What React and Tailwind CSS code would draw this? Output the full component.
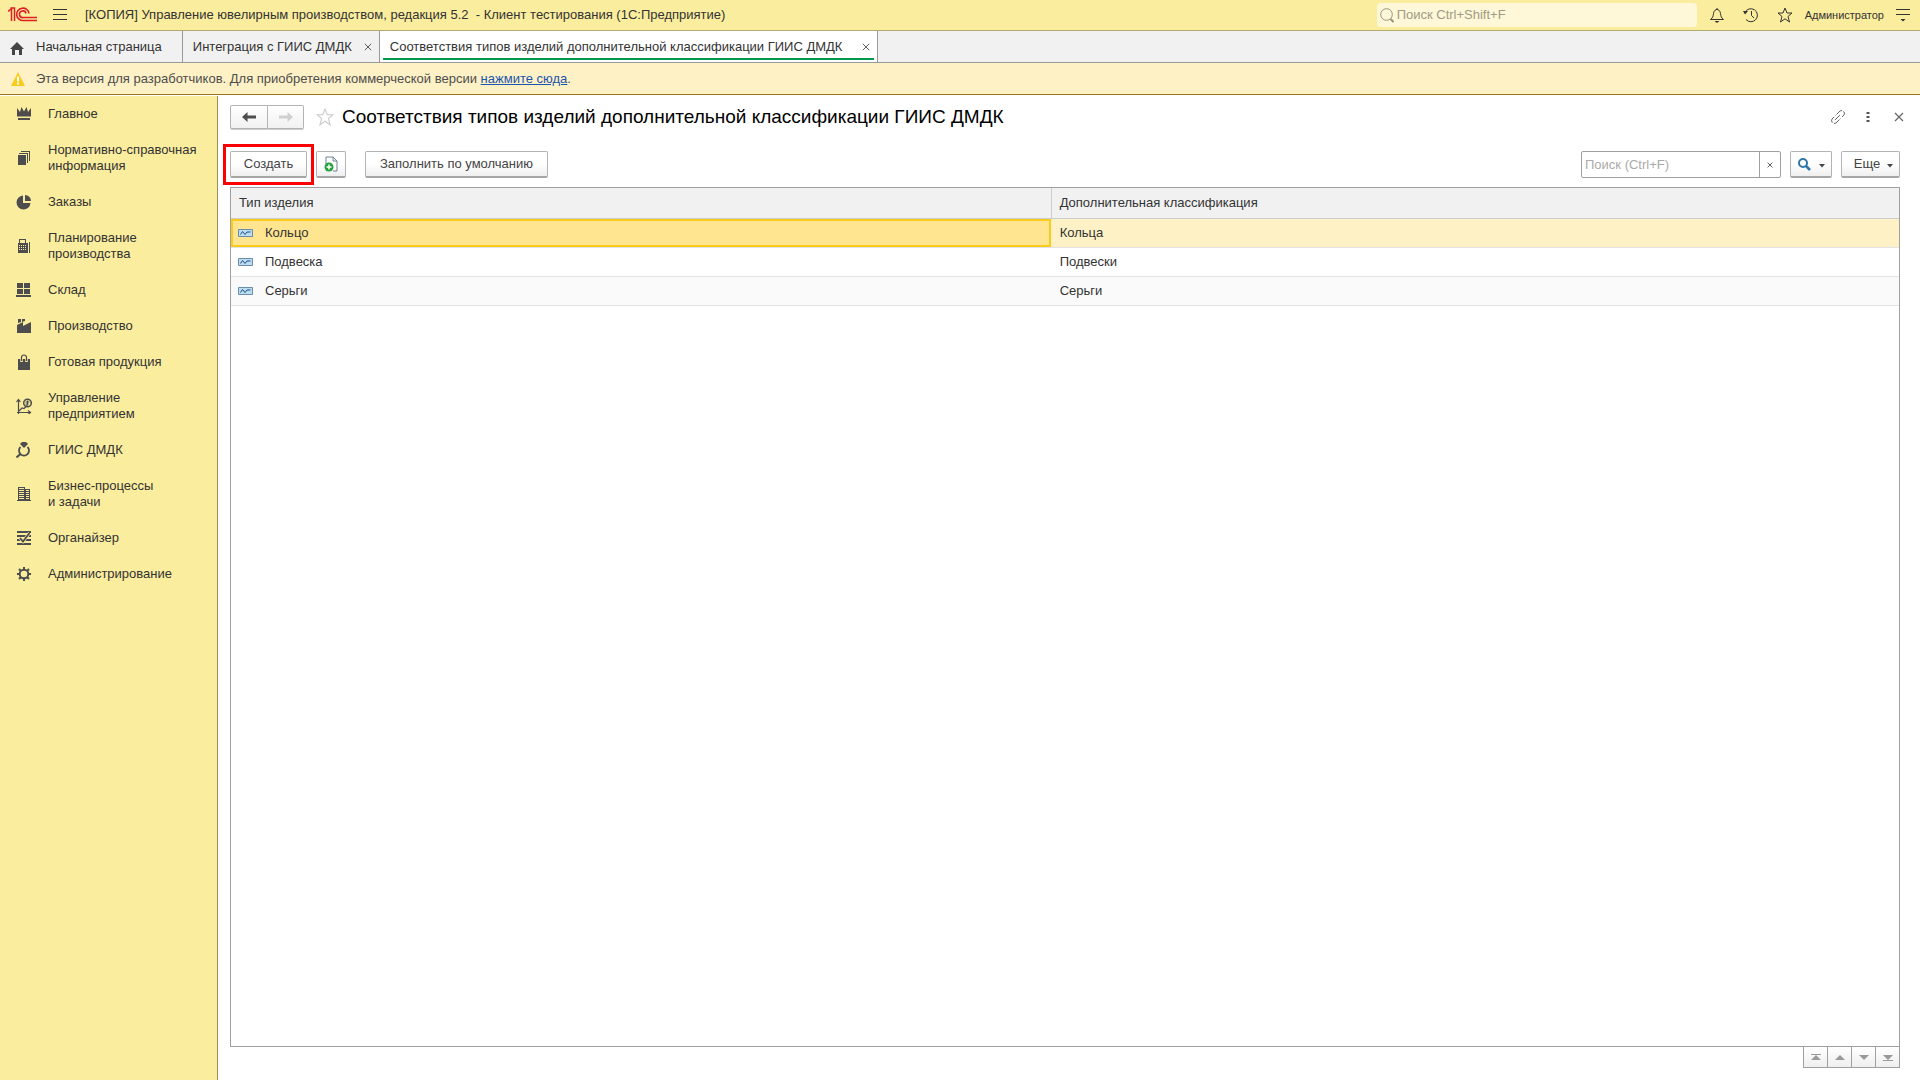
import { useState } from 'react';

const SECTIONS = [
  { icon: 'crown', lines: ['Главное'] },
  { icon: 'docs', lines: ['Нормативно-справочная', 'информация'] },
  { icon: 'pie', lines: ['Заказы'] },
  { icon: 'calc', lines: ['Планирование', 'производства'] },
  { icon: 'store', lines: ['Склад'] },
  { icon: 'factory', lines: ['Производство'] },
  { icon: 'bag', lines: ['Готовая продукция'] },
  { icon: 'chart', lines: ['Управление', 'предприятием'] },
  { icon: 'ring', lines: ['ГИИС ДМДК'] },
  { icon: 'building', lines: ['Бизнес-процессы', 'и задачи'] },
  { icon: 'organizer', lines: ['Органайзер'] },
  { icon: 'gear', lines: ['Администрирование'] },
];

const ROWS = [
  { type: 'Кольцо', extra: 'Кольца' },
  { type: 'Подвеска', extra: 'Подвески' },
  { type: 'Серьги', extra: 'Серьги' },
];

const SECTION_ICONS = {
  crown: (
    <path d="M1 2l3 4 1.500-5L8 5.500 10.500 1 12 6l3-4v8.500H1zM2 12h12v2H2z" fill="currentColor" />
  ),
  docs: (
    <g fill="currentColor">
      <path d="M2 5h8v10H2z" />
      <path d="M3 3h9v10h-1V4H3zM5 1h9v10h-1V2H5z" />
    </g>
  ),
  pie: (
    <g fill="currentColor">
      <path d="M7 1.500V9h7.500A7 7 0 1 1 7 1.500z" />
      <path d="M9 1a6 6 0 0 1 6 6H9z" />
    </g>
  ),
  calc: (
    <g fill="currentColor">
      <path fillRule="evenodd" d="M3 1h7v4h2v10H2V5h1zM4 2v3h5V2zM3 7v1h1V7zM5 7v1h1V7zM7 7v1h1V7zM9 7v1h1V7zM3 9v1h1V9zM5 9v1h1V9zM7 9v1h1V9zM9 9v1h1V9zM3 11v1h1v-1zM5 11v1h1v-1zM7 11v1h1v-1zM9 11v1h1v-1z" />
      <path d="M13 4h1v11h-1z" />
    </g>
  ),
  store: (
    <path d="M1 1h6v5H1zM8 1h6v5H8zM1 7h6v5H1zM8 7h6v5H8zM0 13h15v2H0z" fill="currentColor" />
  ),
  factory: (
    <path d="M2 1h3v3L2 5zM6 1h3v2L6 4zM1 15V7l6-3v4l8-4v11z" fill="currentColor" />
  ),
  bag: (
    <g>
      <path d="M2 5h12v11H2z" fill="currentColor" />
      <path d="M5.500 8V4a2.500 3 0 0 1 5 0v4" fill="none" stroke="#fbed9e" strokeWidth="2.500" />
      <path d="M5.500 7V3.500a2.500 2.500 0 0 1 5 0V7" fill="none" stroke="currentColor" strokeWidth="1.200" />
    </g>
  ),
  chart: (
    <g fill="none" stroke="currentColor" strokeWidth="1.200">
      <path d="M2.500 16V2M.5 4l2-2.500 2 2.500M1 14.500h13M12 12.500l2.500 2-2.500 2M3 13l3-3 2 .5 3-3" />
      <circle cx="11.500" cy="5" r="3.800" strokeWidth="1.500" />
      <path d="M9.500 4h4M9.500 6h3M11.500 2.500v5" />
    </g>
  ),
  ring: (
    <g>
      <path d="M6 0h4l2 2-4 4-4-4z" fill="currentColor" />
      <path d="M4.500 5a5 5 0 1 0 7 0" fill="none" stroke="currentColor" strokeWidth="1.800" />
      <path d="M4.500 12L.5 15.500" stroke="currentColor" strokeWidth="2" />
    </g>
  ),
  building: (
    <g fill="currentColor">
      <path fillRule="evenodd" d="M2 1h7v13H2zM3 2v1h5V2zM3 4v1h5V4zM3 6v1h5V6zM3 8v1h5V8zM3 10v1h5v-1zM3 12v1h5v-1z" />
      <path fillRule="evenodd" d="M9 3h5v11H9zM10 4v1h3V4zM10 6v1h3V6zM10 8v1h3V8zM10 10v1h3v-1zM10 12v1h3v-1z" />
      <path d="M1 14h14v1H1z" />
    </g>
  ),
  organizer: (
    <g fill="none" stroke="currentColor">
      <path d="M1 2h14M1 6h14M1 10h14M1 14h14" strokeWidth="2" />
      <path d="M4 8l3 3.500L13.500 3" stroke="#fbed9e" strokeWidth="3" />
      <path d="M4 8l3 3.500L13.500 3" strokeWidth="1.800" />
    </g>
  ),
  gear: (
    <g fill="none" stroke="currentColor">
      <circle cx="8" cy="8" r="4.300" strokeWidth="2" />
      <path d="M8 1v2.500M8 12.500V15M1 8h2.500M12.500 8H15M3 3l1.800 1.800M11.200 11.200L13 13M3 13l1.800-1.800M11.200 4.800L13 3" strokeWidth="2" />
    </g>
  ),
};

function SectionIcon({ name }) {
  return (
    <svg viewBox="0 0 16 16" className="size-4 shrink-0 text-[#4d4d4d]" aria-hidden="true">
      {SECTION_ICONS[name]}
    </svg>
  );
}

function Logo() {
  return (
    <svg viewBox="0 0 30 16" className="h-4 w-[30px] shrink-0" fill="none" stroke="#dd1f26" aria-hidden="true">
      <path d="M0 4.500L3.500 1.500V14M2.500 1H6.500V14" strokeWidth="1.500" />
      <path d="M21 6.500A6.200 6.200 0 1 0 15.500 13.500H29" strokeWidth="1.600" />
      <path d="M18 6.500A3.300 3.300 0 1 0 15.500 10.500H29" strokeWidth="1.600" />
    </svg>
  );
}

function Star({ className }) {
  return (
    <svg viewBox="0 0 16 16" className={className} fill="none" stroke="currentColor" aria-hidden="true">
      <path d="M8 1l2 5h5l-4 3.500 1.500 5.500L8 11.800 3.500 15 5 9.500 1 6h5z" />
    </svg>
  );
}

function Cross({ className }) {
  return (
    <svg viewBox="0 0 10 10" className={className} fill="none" stroke="currentColor" aria-hidden="true">
      <path d="M1 1l8 8M9 1L1 9" strokeWidth="1.200" />
    </svg>
  );
}

function Caret() {
  return (
    <svg viewBox="0 0 6 4" className="mt-1 h-1 w-1.5 shrink-0" aria-hidden="true">
      <path d="M0 0h6L3 3.500z" fill="#444" />
    </svg>
  );
}

function TopBar() {
  return (
    <header className="flex h-[31px] shrink-0 items-center border-b border-[#b3aa70] bg-[#fbed9e] pr-2.5 pl-2 text-[#333]">
      <Logo />
      <button aria-label="Главное меню" className="ml-[15px]">
        <svg viewBox="0 0 14 12" className="h-3 w-3.5" stroke="#333" aria-hidden="true">
          <path d="M0 .5h14M0 5.500h14M0 10.500h14" />
        </svg>
      </button>
      <h1 className="ml-[18px] flex-1 whitespace-pre">
        [КОПИЯ] Управление ювелирным производством, редакция 5.2  - Клиент тестирования (1С:Предприятие)
      </h1>
      <label className="flex h-6 w-80 items-center rounded-sm bg-[#fef7d8] pl-[3px]">
        <svg viewBox="0 0 14 15" className="h-[15px] w-3.5" fill="none" stroke="#999480" aria-hidden="true">
          <circle cx="6.500" cy="6.500" r="5.800" />
          <path d="M10.500 11l3 3" strokeWidth="2" />
        </svg>
        <input
          aria-label="Глобальный поиск"
          placeholder="Поиск Ctrl+Shift+F"
          className="ml-[3px] flex-1 bg-transparent outline-none placeholder:text-[#a09b85]"
        />
      </label>
      <div className="ml-3 flex items-center gap-[18px]">
        <button aria-label="Уведомления">
          <svg viewBox="0 0 16 16" className="size-4" fill="none" stroke="#333" aria-hidden="true">
            <path d="M8 1v1.500M1.500 12.500c2.500-2 2.500-3 3-6C5 3.500 6.500 2.500 8 2.500s3 1 3.500 4c.5 3 .5 4 3 6z" />
            <path d="M5.500 14h5L8 16z" fill="#333" stroke="none" />
          </svg>
        </button>
        <button aria-label="История">
          <svg viewBox="0 0 16 16" className="size-4" fill="none" stroke="#333" aria-hidden="true">
            <path d="M2 5.500A6.500 6.500 0 1 1 3 12.500M8.500 4v4.500l2.500 2.500" />
            <path d="M0 4h5L2 7.500z" fill="#333" stroke="none" />
          </svg>
        </button>
        <button aria-label="Избранное">
          <Star className="size-4" />
        </button>
      </div>
      <button className="ml-3 text-[11px]">Администратор</button>
      <button aria-label="Настройки" className="ml-3">
        <svg viewBox="0 0 14 14" className="size-3.5" aria-hidden="true">
          <path d="M0 1.500h14M0 6.500h14" stroke="#333" />
          <path d="M4.500 11h5L7 13.500z" fill="#333" />
        </svg>
      </button>
    </header>
  );
}

function TabBar() {
  return (
    <nav className="flex h-8 shrink-0 border-b border-[#999] bg-[#f1f1f1] text-[#333]">
      <button className="flex items-center border-r border-[#999] pr-5 pl-2.5">
        <svg viewBox="0 0 14 13" className="mt-1 h-[13px] w-3.5" aria-hidden="true">
          <path d="M7 0l7 7h-2v6H9V8H5v5H2V7H0z" fill="#444" />
        </svg>
        <span className="ml-3">Начальная страница</span>
      </button>
      <div className="flex items-center border-r border-[#999] pr-[7px] pl-2.5">
        <button>Интеграция с ГИИС ДМДК</button>
        <button aria-label="Закрыть вкладку" className="ml-3">
          <Cross className="size-2 text-[#555]" />
        </button>
      </div>
      <div className="flex border-r border-[#999] bg-white px-[3px] pb-0.5">
        <div className="flex items-center border-b-2 border-[#009a4e] pt-1 pr-1 pl-[7px]">
          <button>Соответствия типов изделий дополнительной классификации ГИИС ДМДК</button>
          <button aria-label="Закрыть вкладку" className="ml-5">
            <Cross className="size-2 text-[#555]" />
          </button>
        </div>
      </div>
    </nav>
  );
}

function DevBanner() {
  return (
    <div className="flex h-8 shrink-0 items-center border-b border-[#96791a] bg-[#fdf1c5] pl-[11px] text-[#4d4d4d]">
      <svg viewBox="0 0 14 14" className="size-3.5" aria-hidden="true">
        <path d="M7 0l7 14H0z" fill="#f9cb1c" />
        <path d="M7 4.500v5M7 10.500v2" stroke="#fff" strokeWidth="2" />
      </svg>
      <p className="ml-[11px]">
        Эта версия для разработчиков. Для приобретения коммерческой версии{' '}
        <a href="#buy" className="text-[#1c55ae] underline">нажмите сюда</a>.
      </p>
    </div>
  );
}

function Sidebar() {
  return (
    <aside className="w-[218px] shrink-0 border-r border-[#998f55] bg-[#fbed9e] text-[#333]">
      {SECTIONS.map((section) => (
        <a key={section.icon} href={`#${section.icon}`} className="flex items-center gap-4 py-2.5 pl-4 leading-4">
          <SectionIcon name={section.icon} />
          <span>
            {section.lines.map((line) => (
              <span key={line} className="block">{line}</span>
            ))}
          </span>
        </a>
      ))}
    </aside>
  );
}

const BUTTON =
  'flex h-[27px] items-center justify-center rounded-xs border border-[#b3b3b3] border-b-2 border-b-[#a6a6a6] bg-linear-to-b from-white from-50% to-[#efefef] text-[#444]';

function FormHeader() {
  return (
    <div className="flex h-6 items-center">
      <div className="flex">
        <button aria-label="Назад" className="flex h-6 w-[38px] items-center justify-center rounded-l-xs border border-[#b3b3b3] bg-linear-to-b from-white to-[#f1f1f1] shadow-[0_1px_0_#ccc]">
          <svg viewBox="0 0 14 12" className="h-3 w-3.5" aria-hidden="true">
            <path d="M0 6l5.500-5v3.500H14v3H5.500V11z" fill="#4d4d4d" />
          </svg>
        </button>
        <button aria-label="Вперед" className="flex h-6 w-9 items-center justify-center rounded-r-xs border border-l-0 border-[#b3b3b3] bg-linear-to-b from-white to-[#f1f1f1] shadow-[0_1px_0_#ccc]">
          <svg viewBox="0 0 14 12" className="h-3 w-3.5" aria-hidden="true">
            <path d="M0 4.500h8.500V1L14 6l-5.500 5V7.500H0z" fill="#d0d0d0" />
          </svg>
        </button>
      </div>
      <button aria-label="В избранное" className="ml-3">
        <Star className="size-[18px] text-[#ccc]" />
      </button>
      <h2 className="ml-2 flex-1 text-[19px] leading-6 text-black">
        Соответствия типов изделий дополнительной классификации ГИИС ДМДК
      </h2>
      <div className="-mr-2 flex items-center text-[#666]">
        <button aria-label="Ссылка">
          <svg viewBox="0 0 16 16" className="size-4" fill="none" stroke="currentColor" aria-hidden="true">
            <path d="M5 11l6-6M6.500 5.500L10 2a2.900 2.900 0 0 1 4 4l-3.500 3.500M9.500 10.500L6 14a2.900 2.900 0 0 1-4-4l3.500-3.500" strokeDasharray="7 1.500" />
          </svg>
        </button>
        <button aria-label="Дополнительно" className="ml-5">
          <svg viewBox="0 0 4 12" className="h-3 w-1" fill="#555" aria-hidden="true">
            <path d="M.5 1h3v2h-3zM.5 5h3v2h-3zM.5 9h3v2h-3z" />
          </svg>
        </button>
        <button aria-label="Закрыть" className="ml-5 p-1">
          <Cross className="size-2.5" />
        </button>
      </div>
    </div>
  );
}

function Toolbar() {
  const [search, setSearch] = useState('');

  return (
    <div className="mt-[15px] flex h-[41px] items-center">
      <div className="-ml-[7px] border-3 border-[#ff0000] p-1">
        <button className={`${BUTTON} w-[77px]`}>Создать</button>
      </div>
      <button aria-label="Скопировать" className={`${BUTTON} ml-0.5 w-[30px]`}>
        <svg viewBox="0 0 14 16" className="h-4 w-3.5" fill="none" aria-hidden="true">
          <path d="M2 8V1h7l4 4v10H9" stroke="#6f8296" />
          <path d="M9 1v4h4" stroke="#6f8296" />
          <circle cx="5" cy="11" r="4.500" fill="#25a03a" />
          <path d="M5 8.500v5M2.500 11h5" stroke="#fff" strokeWidth="1.500" />
        </svg>
      </button>
      <button className={`${BUTTON} ml-[19px] px-3.5`}>Заполнить по умолчанию</button>
      <div className="ml-auto flex h-[27px] w-[200px] rounded-xs border border-[#a0a0a0] bg-white">
        <input
          aria-label="Поиск"
          value={search}
          onChange={(e) => setSearch(e.target.value)}
          placeholder="Поиск (Ctrl+F)"
          className="w-0 flex-1 px-[3px] outline-none placeholder:text-[#aaa]"
        />
        <button
          aria-label="Очистить"
          onClick={() => setSearch('')}
          className="flex w-[21px] items-center justify-center border-l border-[#a0a0a0]"
        >
          <Cross className="size-1.5 text-[#222]" />
        </button>
      </div>
      <button aria-label="Найти" className={`${BUTTON} ml-[9px] w-[42px] gap-2`}>
        <svg viewBox="0 0 13 13" className="size-[13px]" fill="none" stroke="#2f76ab" aria-hidden="true">
          <circle cx="5" cy="5" r="4" strokeWidth="2" />
          <path d="M8 8l4 4" strokeWidth="2.500" />
        </svg>
        <Caret />
      </button>
      <button className={`${BUTTON} ml-[9px] w-[59px] gap-[7px] pl-1.5`}>
        Еще
        <Caret />
      </button>
    </div>
  );
}

function ItemIcon() {
  return (
    <svg viewBox="0 0 15 8" className="h-2 w-[15px] shrink-0" fill="none" aria-hidden="true">
      <path d="M.5.500h14v7H.5z" fill="#bcdcf2" stroke="#6b8dab" />
      <path d="M2.500 5.500l2-3 2.500 3 2-2.500h3.500" stroke="#1d4f80" />
    </svg>
  );
}

function ItemsTable() {
  const [selected, setSelected] = useState(0);

  return (
    <div className="flex-1 border border-[#a0a0a0] bg-white">
      <table className="w-full table-fixed border-separate border-spacing-0 text-left text-[#333]">
        <colgroup>
          <col className="w-[49.2%]" />
          <col />
        </colgroup>
        <thead>
          <tr className="bg-[#f1f1f1]">
            <th className="h-[31px] border-r border-b border-[#ccc] px-2 font-normal">Тип изделия</th>
            <th className="h-[31px] border-b border-[#ccc] px-2 font-normal">Дополнительная классификация</th>
          </tr>
        </thead>
        <tbody>
          {ROWS.map((row, i) => (
            <tr
              key={row.type}
              onClick={() => setSelected(i)}
              className={i === selected ? 'bg-[#fdf1c5]' : i % 2 === 0 ? 'bg-[#fafafa]' : 'bg-white'}
            >
              <td className="h-[29px] border-b border-[#e3e3e3] p-0 pr-px">
                <div
                  className={`flex h-7 items-center gap-3 border-2 pl-[5px] ${
                    i === selected ? 'border-[#f9cb1c] bg-[#ffe58f]' : 'border-transparent'
                  }`}
                >
                  <ItemIcon />
                  {row.type}
                </div>
              </td>
              <td className="h-[29px] border-b border-[#e3e3e3] px-2 py-0">{row.extra}</td>
            </tr>
          ))}
        </tbody>
      </table>
    </div>
  );
}

const SCROLL_BUTTONS = [
  { label: 'В начало', path: 'M0 1h10v1H0zM5 2l5 5H0z' },
  { label: 'Вверх', path: 'M5 2l5 5H0z' },
  { label: 'Вниз', path: 'M0 2h10L5 7z' },
  { label: 'В конец', path: 'M0 2h10L5 7zM0 7h10v1H0z' },
];

function ScrollButtons() {
  return (
    <div className="flex justify-end">
      <div className="flex border-l border-[#a0a0a0]">
        {SCROLL_BUTTONS.map((button) => (
          <button
            key={button.label}
            aria-label={button.label}
            className="flex h-[21px] w-6 items-center justify-center border-r border-b border-[#a0a0a0] bg-linear-to-b from-white to-[#efefef]"
          >
            <svg viewBox="0 0 10 9" className="h-[9px] w-2.5" fill="#999" aria-hidden="true">
              <path d={button.path} />
            </svg>
          </button>
        ))}
      </div>
    </div>
  );
}

export default function App() {
  return (
    <div className="flex min-h-screen flex-col bg-white font-['Liberation_Sans',Arial,sans-serif] text-[13px] leading-4">
      <TopBar />
      <TabBar />
      <DevBanner />
      <div className="flex flex-1 pt-px">
        <Sidebar />
        <main className="flex flex-1 flex-col pt-[9px] pr-5 pb-3 pl-3">
          <FormHeader />
          <Toolbar />
          <div className="mt-0.5 flex flex-1 flex-col">
            <ItemsTable />
            <ScrollButtons />
          </div>
        </main>
      </div>
    </div>
  );
}
